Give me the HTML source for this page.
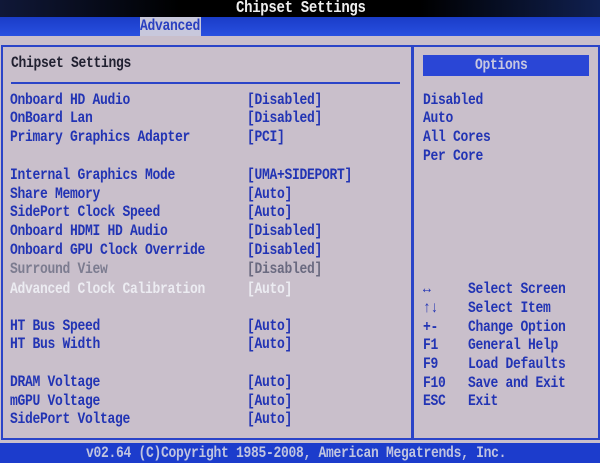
<!DOCTYPE html>
<html><head><style>
body{margin:0;width:600px;height:463px;overflow:hidden;background:#c9bfcb;font-family:"Liberation Mono",monospace;font-weight:bold;font-size:13px;position:relative}
.t{position:absolute;white-space:pre;color:#2234b4;letter-spacing:-0.3px;line-height:16px;transform:scaleY(1.2);transform-origin:0 0}
#top{position:absolute;left:0;top:0;width:600px;height:17px;background:linear-gradient(90deg,#101838,#000 30%,#000 70%,#102050)}
#bar{position:absolute;left:0;top:17px;width:600px;height:19px;background:linear-gradient(180deg,#1a3cc8,#2850e0)}
#tab{position:absolute;left:140px;top:17px;width:61px;height:19px;background:#c8c8dc}
#foot{position:absolute;left:0;top:443px;width:600px;height:20px;background:#1c3ccc}
.box{position:absolute;border:2px solid #2a44c8}
</style></head><body>
<div id="top"></div>
<div class="t" style="left:236px;top:-1px;color:#eee;font-size:14px">Chipset Settings</div>
<div id="bar"></div><div id="tab"></div>
<div class="t" style="left:140px;top:17px;color:#2a40c0">Advanced</div>
<div class="box" style="left:1px;top:45px;width:409px;height:391px"></div>
<div class="box" style="left:411px;top:45px;width:185px;height:391px;border-left-width:2px"></div>
<div style="position:absolute;left:11px;top:82px;width:389px;height:2px;background:#2a44c8"></div>
<div style="position:absolute;left:423px;top:55px;width:166px;height:21px;background:#2a46d6"></div>
<div class="t" style="left:475px;top:56px;color:#c8c8e0">Options</div>
<div class="t" style="left:11px;top:54px;color:#202030">Chipset Settings</div>
<div class="t" style="left:10px;top:91px">Onboard HD Audio</div><div class="t" style="left:247px;top:91px">[Disabled]</div>
<div class="t" style="left:10px;top:109px">OnBoard Lan</div><div class="t" style="left:247px;top:109px">[Disabled]</div>
<div class="t" style="left:10px;top:128px">Primary Graphics Adapter</div><div class="t" style="left:247px;top:128px">[PCI]</div>
<div class="t" style="left:10px;top:166px">Internal Graphics Mode</div><div class="t" style="left:247px;top:166px">[UMA+SIDEPORT]</div>
<div class="t" style="left:10px;top:185px">Share Memory</div><div class="t" style="left:247px;top:185px">[Auto]</div>
<div class="t" style="left:10px;top:203px">SidePort Clock Speed</div><div class="t" style="left:247px;top:203px">[Auto]</div>
<div class="t" style="left:10px;top:222px">Onboard HDMI HD Audio</div><div class="t" style="left:247px;top:222px">[Disabled]</div>
<div class="t" style="left:10px;top:241px">Onboard GPU Clock Override</div><div class="t" style="left:247px;top:241px">[Disabled]</div>
<div class="t" style="left:10px;top:260px;color:#7c7c90">Surround View</div><div class="t" style="left:247px;top:260px;color:#6a6a80">[Disabled]</div>
<div class="t" style="left:10px;top:280px;color:#ececf2">Advanced Clock Calibration</div><div class="t" style="left:247px;top:280px;color:#ececf2">[Auto]</div>
<div class="t" style="left:10px;top:317px">HT Bus Speed</div><div class="t" style="left:247px;top:317px">[Auto]</div>
<div class="t" style="left:10px;top:335px">HT Bus Width</div><div class="t" style="left:247px;top:335px">[Auto]</div>
<div class="t" style="left:10px;top:373px">DRAM Voltage</div><div class="t" style="left:247px;top:373px">[Auto]</div>
<div class="t" style="left:10px;top:392px">mGPU Voltage</div><div class="t" style="left:247px;top:392px">[Auto]</div>
<div class="t" style="left:10px;top:410px">SidePort Voltage</div><div class="t" style="left:247px;top:410px">[Auto]</div>
<div class="t" style="left:423px;top:91px">Disabled</div>
<div class="t" style="left:423px;top:109px">Auto</div>
<div class="t" style="left:423px;top:128px">All Cores</div>
<div class="t" style="left:423px;top:147px">Per Core</div>
<div class="t" style="left:423px;top:280px">↔</div><div class="t" style="left:468px;top:280px">Select Screen</div>
<div class="t" style="left:423px;top:299px">↑↓</div><div class="t" style="left:468px;top:299px">Select Item</div>
<div class="t" style="left:423px;top:318px">+-</div><div class="t" style="left:468px;top:318px">Change Option</div>
<div class="t" style="left:423px;top:336px">F1</div><div class="t" style="left:468px;top:336px">General Help</div>
<div class="t" style="left:423px;top:355px">F9</div><div class="t" style="left:468px;top:355px">Load Defaults</div>
<div class="t" style="left:423px;top:374px">F10</div><div class="t" style="left:468px;top:374px">Save and Exit</div>
<div class="t" style="left:423px;top:392px">ESC</div><div class="t" style="left:468px;top:392px">Exit</div>
<div id="foot"></div>
<div class="t" style="left:86px;top:444px;color:#c0c4e0">v02.64 (C)Copyright 1985-2008, American Megatrends, Inc.</div>
</body></html>
